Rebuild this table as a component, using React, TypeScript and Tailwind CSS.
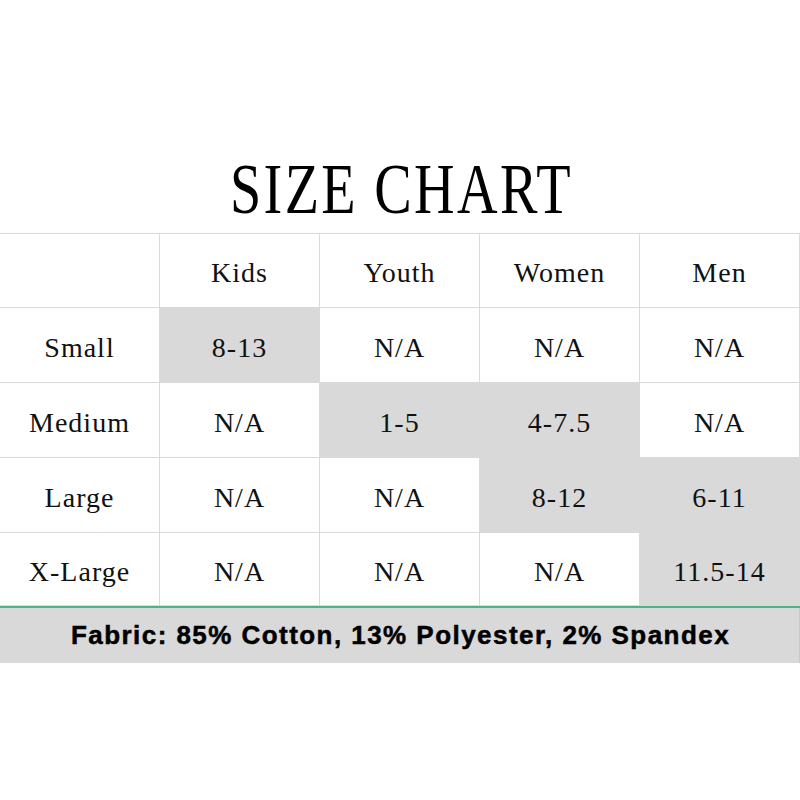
import React from "react";

const cols = ["", "Kids", "Youth", "Women", "Men"];
type Cell = { t: string; g?: boolean };
const rows: { label: string; cells: Cell[] }[] = [
  { label: "Small", cells: [{ t: "8-13", g: true }, { t: "N/A" }, { t: "N/A" }, { t: "N/A" }] },
  { label: "Medium", cells: [{ t: "N/A" }, { t: "1-5", g: true }, { t: "4-7.5", g: true }, { t: "N/A" }] },
  { label: "Large", cells: [{ t: "N/A" }, { t: "N/A" }, { t: "8-12", g: true }, { t: "6-11", g: true }] },
  { label: "X-Large", cells: [{ t: "N/A" }, { t: "N/A" }, { t: "N/A" }, { t: "11.5-14", g: true }] },
];

const serif = { fontFamily: '"Liberation Serif", "Times New Roman", serif' };

function CellBox({ children, gray, h }: { children?: React.ReactNode; gray?: boolean; h: string }) {
  return (
    <div
      className={
        "flex items-center justify-center pt-[5px] text-[28px] tracking-[1px] text-[#111] border-r border-b " +
        (gray ? "bg-[#d9d9d9] border-[#d9d9d9] " : "bg-white border-[#dadada] ") +
        h
      }
    >
      {children}
    </div>
  );
}

export default function App() {
  const rowH = ["h-[75px]", "h-[75px]", "h-[75px]", "h-[73px]"];
  return (
    <div className="w-[800px] h-[800px] bg-white overflow-hidden" style={serif}>
      <div className="h-[233px] pt-[153px] flex justify-center">
        <div className="text-[72px] leading-none text-black inline-block scale-x-[0.78] tracking-[3px] pl-[3px] whitespace-nowrap">
          SIZE CHART
        </div>
      </div>
      <div className="border-t border-[#dadada] grid grid-cols-[160px_160px_160px_160px_160px]">
        {cols.map((c, i) => (
          <CellBox key={i} h="h-[74px]">
            {c}
          </CellBox>
        ))}
        {rows.map((r, ri) => (
          <React.Fragment key={r.label}>
            <CellBox h={rowH[ri]}>{r.label}</CellBox>
            {r.cells.map((c, ci) => (
              <CellBox key={ci} gray={c.g} h={rowH[ri]}>
                {c.t}
              </CellBox>
            ))}
          </React.Fragment>
        ))}
      </div>
      <div className="h-[2px] bg-[#4fb38a]" />
      <div
        className="h-[55px] bg-[#d9d9d9] border-r border-[#c8c8c8] flex items-center justify-center pl-[2px] text-[26px] font-bold tracking-[1.45px] text-black whitespace-nowrap [-webkit-text-stroke:0.5px_black]"
        style={{ fontFamily: '"Liberation Sans", Arial, sans-serif' }}
      >
        Fabric: 85% Cotton, 13% Polyester, 2% Spandex
      </div>
    </div>
  );
}
